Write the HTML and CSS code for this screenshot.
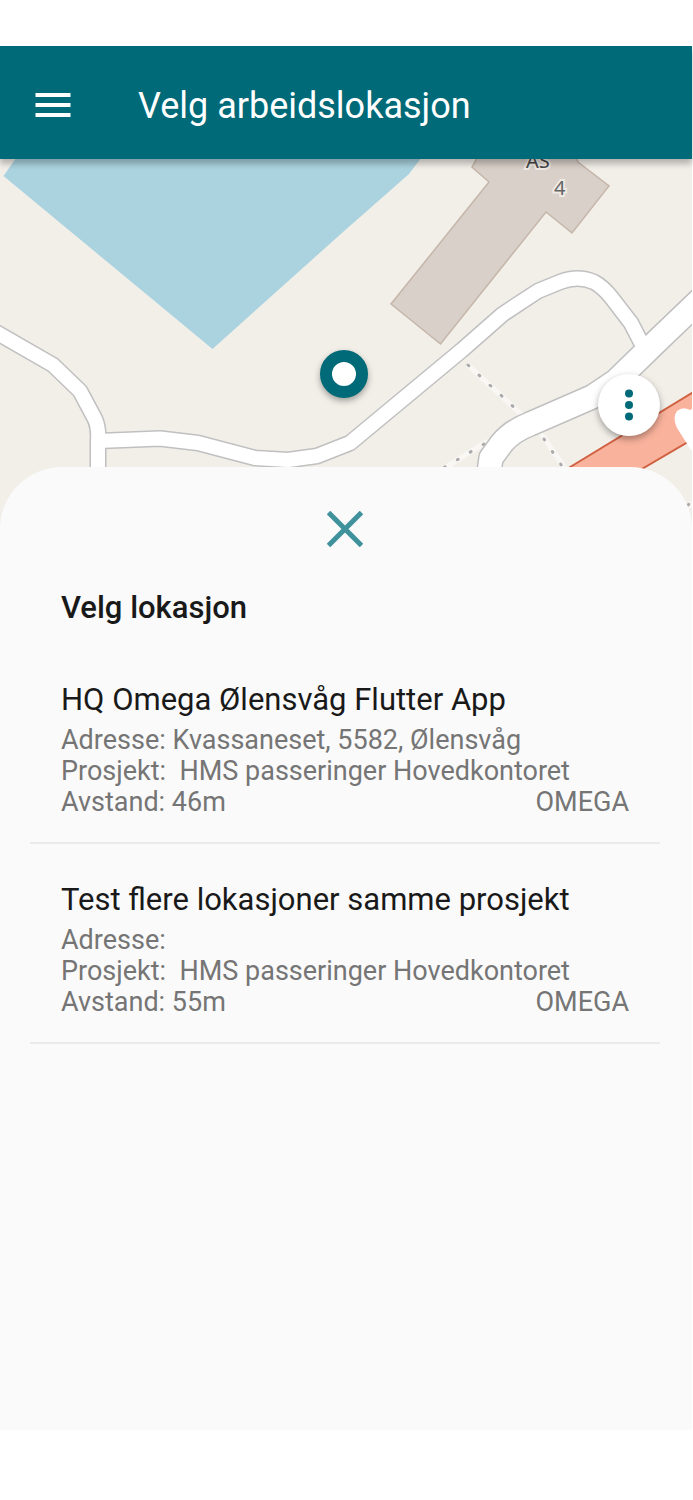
FILE: index.html
```html
<!DOCTYPE html>
<html lang="no">
<head>
    <meta charset="UTF-8">
    <meta name="viewport" content="width=device-width, initial-scale=1.0">
    <title>Velg arbeidslokasjon</title>
    <link rel="stylesheet" href="styles.css">
</head>

<body>
    <header class="app-bar">
        <button class="menu-btn" type="button" aria-label="Meny">
            <svg width="36" height="26" viewBox="0 0 36 26"><path d="M.5 2h35M.5 12h35M.5 22h35" stroke="#fff" stroke-width="4"/></svg>
        </button>
        <h1>Velg arbeidslokasjon</h1>
    </header>

    <div class="map">
        <svg class="map-tiles" viewBox="0 159 692 371" preserveAspectRatio="xMidYMin slice" aria-hidden="true">
            <!-- water and building -->
            <path class="water" d="M16 158L3.500 176L212.500 349L343 232L409 174L421 158Z"/>
            <path class="building" d="M477 158L472 167L489 182L391 304L440.500 344L546 212L572 233L609 186L578 162L574 150Z"/>

            <!-- footpaths -->
            <g class="path-bed">
                <path d="M467 364L525 418M540 432L566 470M446 467L488 441M680 514L696 500"/>
            </g>
            <g class="path-dots">
                <path d="M468 365L530 422"/>
                <path d="M544 439L566 472"/>
                <path d="M484 444L440 470"/>
                <path d="M688 505L698 497"/>
            </g>

            <!-- main road (red) -->
            <path class="trunk" d="M562 472L700 388V435L635 473Z"/>

            <!-- roads, casing first -->
            <g class="road casing">
                <path d="M-6 331L53 365L80 391L95 419Q99 428 98 441V480"/>
                <path d="M98 441L160 438.500L198 443L255 458L288 460L317 456L350 443L462 350L503 314L538 291L560 282Q578 275 594 282Q603 287 611 297L631 323L645 350"/>
                <path class="wide" d="M702 298L655 343L616 381L592 397L530 424Q512 431 502 443L491 458L488 480"/>
            </g>
            <g class="road fill">
                <path d="M-6 331L53 365L80 391L95 419Q99 428 98 441V480"/>
                <path d="M98 441L160 438.500L198 443L255 458L288 460L317 456L350 443L462 350L503 314L538 291L560 282Q578 275 594 282Q603 287 611 297L631 323L645 350"/>
                <path class="wide" d="M702 298L655 343L616 381L592 397L530 424Q512 431 502 443L491 458L488 480"/>
            </g>
            <path fill="#fff" d="M691 450L677 428Q672 417 677 411Q683 406 690 410L700 404V446Z"/>

            <text class="label" x="526" y="168">AS</text>
            <text class="label number" x="554" y="195">4</text>
        </svg>
        <span class="marker"></span>
        <button class="more-btn" type="button" aria-label="Flere valg">
            <svg width="10" height="32" viewBox="0 0 10 32"><g fill="#006a79"><circle cx="5" cy="4.500" r="4"/><circle cx="5" cy="16" r="4"/><circle cx="5" cy="27.500" r="4"/></g></svg>
        </button>
    </div>

    <main class="sheet">
        <button class="close-btn" type="button" aria-label="Lukk">
            <svg width="36" height="36" viewBox="0 0 36 36"><path d="M1.500 1.500L34.500 34.500M34.500 1.500L1.500 34.500" stroke="#3f929c" stroke-width="5"/></svg>
        </button>
        <h2>Velg lokasjon</h2>
        <ul class="locations">
            <li>
                <h3>HQ Omega Ølensvåg Flutter App</h3>
                <p>Adresse: Kvassaneset, 5582, Ølensvåg</p>
                <p>Prosjekt:&nbsp; HMS passeringer Hovedkontoret</p>
                <p class="distance"><span>Avstand: 46m</span><span>OMEGA</span></p>
            </li>
            <li>
                <h3>Test flere lokasjoner samme prosjekt</h3>
                <p>Adresse:</p>
                <p>Prosjekt:&nbsp; HMS passeringer Hovedkontoret</p>
                <p class="distance"><span>Avstand: 55m</span><span>OMEGA</span></p>
            </li>
        </ul>
    </main>
</body>
</html>
```
FILE: styles.css
```css
* {
    box-sizing: border-box;
}

body {
    margin: 0;
    padding: 46px 1px 70px 0;
    min-height: 100vh;
    display: flex;
    flex-direction: column;
    background-color: #fff;
    font-family: Roboto, sans-serif;
    color: #191919;
}

h1, h2, h3, p, ul {
    margin: 0;
    padding: 0;
}

button {
    border: none;
    padding: 0;
    background: none;
    cursor: pointer;
}

svg {
    display: block;
}

.app-bar {
    position: relative;
    z-index: 1;
    display: flex;
    align-items: center;
    gap: 67px;
    height: 113px;
    padding: 6px 35px 0;
    background-color: #006a79;
    box-shadow: 0 5px 6px rgba(0, 0, 0, 0.25);
}

.app-bar h1 {
    font-size: 36px;
    font-weight: 400;
    line-height: 44px;
    color: #fff;
}

/* map */
.map {
    position: relative;
    height: 371px;
    overflow: hidden;
    background-color: #f2efe9;
}

.map-tiles {
    width: 100%;
    height: 100%;
}

.water {
    fill: #aad3df;
}

.building {
    fill: #d9d0c9;
    stroke: #c6b6aa;
    stroke-width: 1.5;
}

.path-bed {
    fill: none;
    stroke: #f8f7f4;
    stroke-width: 5;
}

.path-dots {
    fill: none;
    stroke: #aaa;
    stroke-width: 3;
    stroke-linecap: round;
    stroke-dasharray: 1 14;
}

.trunk {
    fill: #f9b29c;
    stroke: #cf6040;
    stroke-width: 2;
}

.road {
    fill: none;
    stroke-linejoin: round;
}

.casing {
    stroke: #c0c0c0;
    stroke-width: 17;
}

.casing .wide {
    stroke-width: 26;
}

.fill {
    stroke: #fff;
    stroke-width: 14;
}

.fill .wide {
    stroke-width: 23;
}

.label {
    font-family: "Noto Sans", sans-serif;
    font-size: 20px;
    fill: #444;
    stroke: #eee9e5;
    stroke-width: 4;
    paint-order: stroke;
}

.number {
    fill: #666;
}

.marker {
    position: absolute;
    top: 191px;
    left: calc(50% - 26px);
    width: 48px;
    height: 48px;
    border: 12px solid #006a79;
    border-radius: 50%;
    background-color: #fff;
    box-shadow: 0 3px 6px rgba(0, 0, 0, 0.35);
}

.more-btn {
    position: absolute;
    top: 215px;
    right: 32px;
    display: flex;
    align-items: center;
    justify-content: center;
    width: 62px;
    height: 62px;
    border-radius: 50%;
    background-color: #fff;
    box-shadow: 0 3px 7px rgba(0, 0, 0, 0.35);
}

/* bottom sheet */
.sheet {
    position: relative;
    flex: 1;
    display: flex;
    flex-direction: column;
    margin-top: -63px;
    padding: 44px 32px 40px 30px;
    border-radius: 62px 62px 0 0;
    background-color: #fafafa;
}

.close-btn {
    align-self: center;
}

h2 {
    margin-top: 43px;
    padding: 0 31px;
    font-size: 31px;
    font-weight: 500;
    line-height: 36px;
}

.locations {
    margin-top: 18px;
    list-style: none;
}

.locations li {
    padding: 38px 31px 24px;
    border-bottom: 2px solid #ebebeb;
}

.locations h3 {
    margin-bottom: 7px;
    font-size: 31px;
    font-weight: 400;
    line-height: 36px;
}

.locations p {
    font-size: 27px;
    line-height: 31px;
    color: #757575;
}

.distance {
    display: flex;
    justify-content: space-between;
}
```
